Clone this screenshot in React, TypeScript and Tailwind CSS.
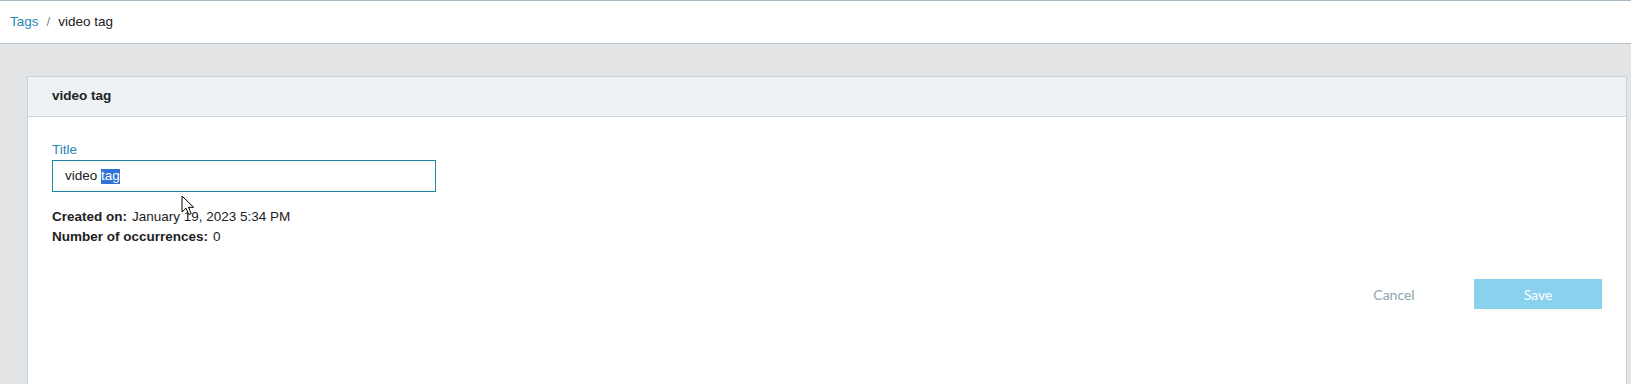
import React from "react";

function Cursor() {
  return (
    <svg
      className="absolute left-[181px] top-[195px]"
      width="14"
      height="22"
      viewBox="0 0 14 22"
    >
      <path
        d="M1 1 L1 17 L5 13.2 L7.8 19.6 L10.2 18.6 L7.5 12.3 L12.6 12.3 Z"
        fill="#ffffff"
        stroke="#000000"
        strokeWidth="1"
        strokeLinejoin="miter"
      />
    </svg>
  );
}

export default function App() {
  return (
    <div
      className="relative w-[1631px] h-[384px] overflow-hidden bg-[#e3e4e6] text-[#222222]"
      style={{ fontFamily: '"Liberation Sans", Arial, sans-serif' }}
    >
      <div className="h-[44px] bg-white border-t border-b border-t-[#a9bac4] border-b-[#b9c3c9] flex items-center px-[10px] text-[13.5px]">
        <span className="text-[#2a86b5]">Tags</span>
        <span className="mx-[8px] text-[#7a8a94]">/</span>
        <span className="text-[#222222]">video tag</span>
      </div>

      <div className="pt-[32px] pl-[27px] pr-[4px]">
        <div className="bg-white border border-b-0 border-[#c5d3da] h-[320px]">
          <div className="h-[40px] bg-[#eef2f5] border-b border-[#c5d3da] flex items-center px-[24px] text-[13.5px] font-bold text-[#222222]">
            video tag
          </div>
          <div className="px-[24px] pt-[23px]">
            <div className="h-[20px] leading-[20px] text-[13.5px] text-[#2a86b5]">
              Title
            </div>
            <div className="w-[384px] h-[32px] border border-[#1f86a8] flex items-center px-[12px] text-[13.5px] text-[#222222]">
              <span>video&nbsp;</span>
              <span className="inline-flex items-center h-[15px] bg-[#3271d4] text-white">tag</span>
            </div>
            <div className="mt-[15px] text-[13.5px] leading-[20px]">
              <div>
                <span className="font-bold">Created on:</span>
                <span className="ml-[5px]">January 19, 2023 5:34 PM</span>
              </div>
              <div>
                <span className="font-bold">Number of occurrences:</span>
                <span className="ml-[5px]">0</span>
              </div>
            </div>
            <div
              className="mt-[32px] flex justify-end gap-[16px] text-[14px]"
              style={{ fontFamily: 'Lato, "Liberation Sans", sans-serif' }}
            >
              <button className="w-[128px] h-[30px] text-[#8fa3ae] bg-transparent">
                Cancel
              </button>
              <button className="w-[128px] h-[30px] bg-[#89d2ee] text-white">
                Save
              </button>
            </div>
          </div>
        </div>
      </div>
      <Cursor />
    </div>
  );
}
